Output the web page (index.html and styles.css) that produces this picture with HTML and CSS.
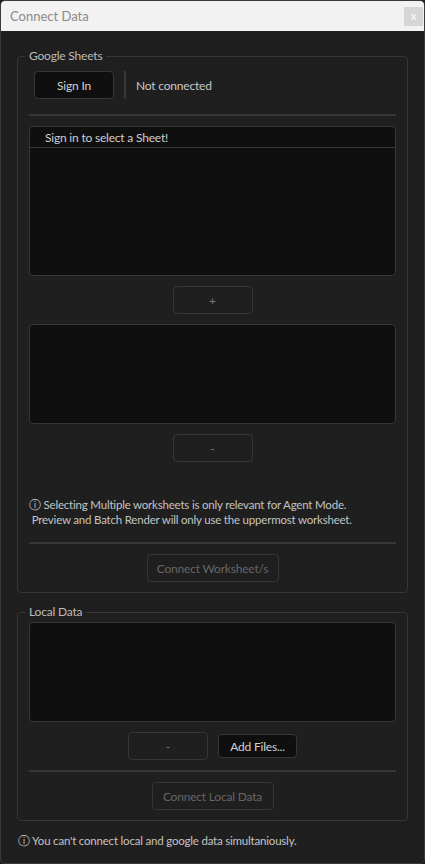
FILE: index.html
```html
<!DOCTYPE html>
<html lang="en">
<head>
<meta charset="utf-8">
<title>Connect Data</title>
<link rel="stylesheet" href="styles.css">
</head>
<body>
<div class="window">
  <div class="titlebar">
    <span class="title">Connect Data</span>
    <span class="close">x</span>
  </div>
  <div class="content">
    <fieldset class="group">
      <legend>Google Sheets</legend>
      <div class="auth-row">
        <button class="btn btn-dark btn-sign">Sign In</button>
        <span class="vsep"></span>
        <span class="status">Not connected</span>
      </div>
      <div class="hsep first"></div>
      <div class="listbox tall">
        <div class="list-head">Sign in to select a Sheet!</div>
      </div>
      <div class="btn-row"><button class="btn btn-ghost">+</button></div>
      <div class="listbox"></div>
      <div class="btn-row"><button class="btn btn-ghost">-</button></div>
      <p class="info">ⓘ Selecting Multiple worksheets is only relevant for Agent Mode.
 Preview and Batch Render will only use the uppermost worksheet.</p>
      <div class="hsep mid"></div>
      <div class="btn-row"><button class="btn btn-ghost btn-connect-ws">Connect Worksheet/s</button></div>
    </fieldset>

    <fieldset class="group local">
      <legend>Local Data</legend>
      <div class="listbox"></div>
      <div class="btn-row">
        <button class="btn btn-ghost">-</button>
        <button class="btn btn-dark btn-add">Add Files...</button>
      </div>
      <div class="hsep"></div>
      <div class="btn-row"><button class="btn btn-ghost btn-connect-local">Connect Local Data</button></div>
    </fieldset>

    <p class="footer">ⓘ You can't connect local and google data simultaniously.</p>
  </div>
</div>
</body>
</html>
```

FILE: styles.css
```css
* { box-sizing: border-box; }

html, body {
  margin: 0;
  padding: 0;
  background: #1e1e1e;
}

body {
  font-family: "Lato", "DejaVu Sans", sans-serif;
  font-size: 11.5px;
  letter-spacing: -0.2px;
  color: #c8c8c8;
}

.window {
  width: 425px;
  height: 864px;
  border: 1px solid #3a3a3a;
  border-radius: 5px;
  background: #1f1f1f;
  overflow: hidden;
  display: flex;
  flex-direction: column;
}

.titlebar {
  height: 30px;
  flex: none;
  background: #f2f2f2;
  display: flex;
  align-items: center;
  justify-content: space-between;
  padding: 0 1px 0 9px;
}

.title {
  font-size: 13px;
  letter-spacing: 0;
  color: #8a8a8a;
}

.close {
  width: 19px;
  height: 19px;
  background: #d6d6d6;
  color: #f4f4f4;
  font-size: 12px;
  font-weight: bold;
  line-height: 18px;
  text-align: center;
}

.content {
  padding: 17px 16px 0;
}

.group {
  margin: 0;
  padding: 2px 11px 10px;
  border: 1px solid #363636;
  border-radius: 4px;
  min-width: 0;
}

.group legend {
  padding: 0 4px;
  margin-left: -4px;
  font-size: 12px;
  line-height: 16px;
  color: #bcbcbc;
}

.local {
  margin-top: 11px;
}

.auth-row {
  margin-top: 5px;
  padding-left: 5px;
  display: flex;
  align-items: center;
  height: 28px;
}

.btn {
  font-family: inherit;
  font-size: 12px;
  letter-spacing: -0.2px;
  height: 28px;
  width: 80px;
  border: 1px solid #363636;
  border-radius: 4px;
  background: transparent;
  color: #777;
  padding: 0;
}

.btn-dark {
  background: #0f0f0f;
  color: #d2d2d2;
}

.btn-add {
  width: 79px;
  height: 24px;
}

.vsep {
  width: 2px;
  height: 28px;
  background: #363636;
  margin: 0 10px 0 10px;
}

.status {
  font-size: 12px;
  color: #c8c8c8;
}

.hsep {
  height: 2px;
  background: #363636;
  margin-top: 10px;
}

.hsep.first { margin-top: 15px; }
.hsep.mid { margin-top: 15px; }

.listbox {
  margin-top: 10px;
  height: 100px;
  background: #0f0f0f;
  border: 1px solid #363636;
  border-radius: 4px;
}

.listbox.tall {
  height: 150px;
}

.local .listbox {
  margin-top: 0;
}

.list-head {
  height: 21px;
  border-bottom: 1px solid #363636;
  padding-left: 15px;
  line-height: 22px;
  font-size: 12px;
  color: #d0d0d0;
}

.btn-row {
  margin-top: 10px;
  display: flex;
  justify-content: center;
  align-items: center;
  gap: 10px;
}

.btn-connect-ws {
  width: 132px;
  color: #666;
}

.btn-connect-local {
  width: 122px;
  color: #666;
}

.info {
  margin: 35px 0 0;
  line-height: 15px;
  white-space: pre-wrap;
  color: #c4c4c4;
}

.footer {
  margin: 12px 0 0 1px;
  line-height: 16px;
  color: #c4c4c4;
}
```
